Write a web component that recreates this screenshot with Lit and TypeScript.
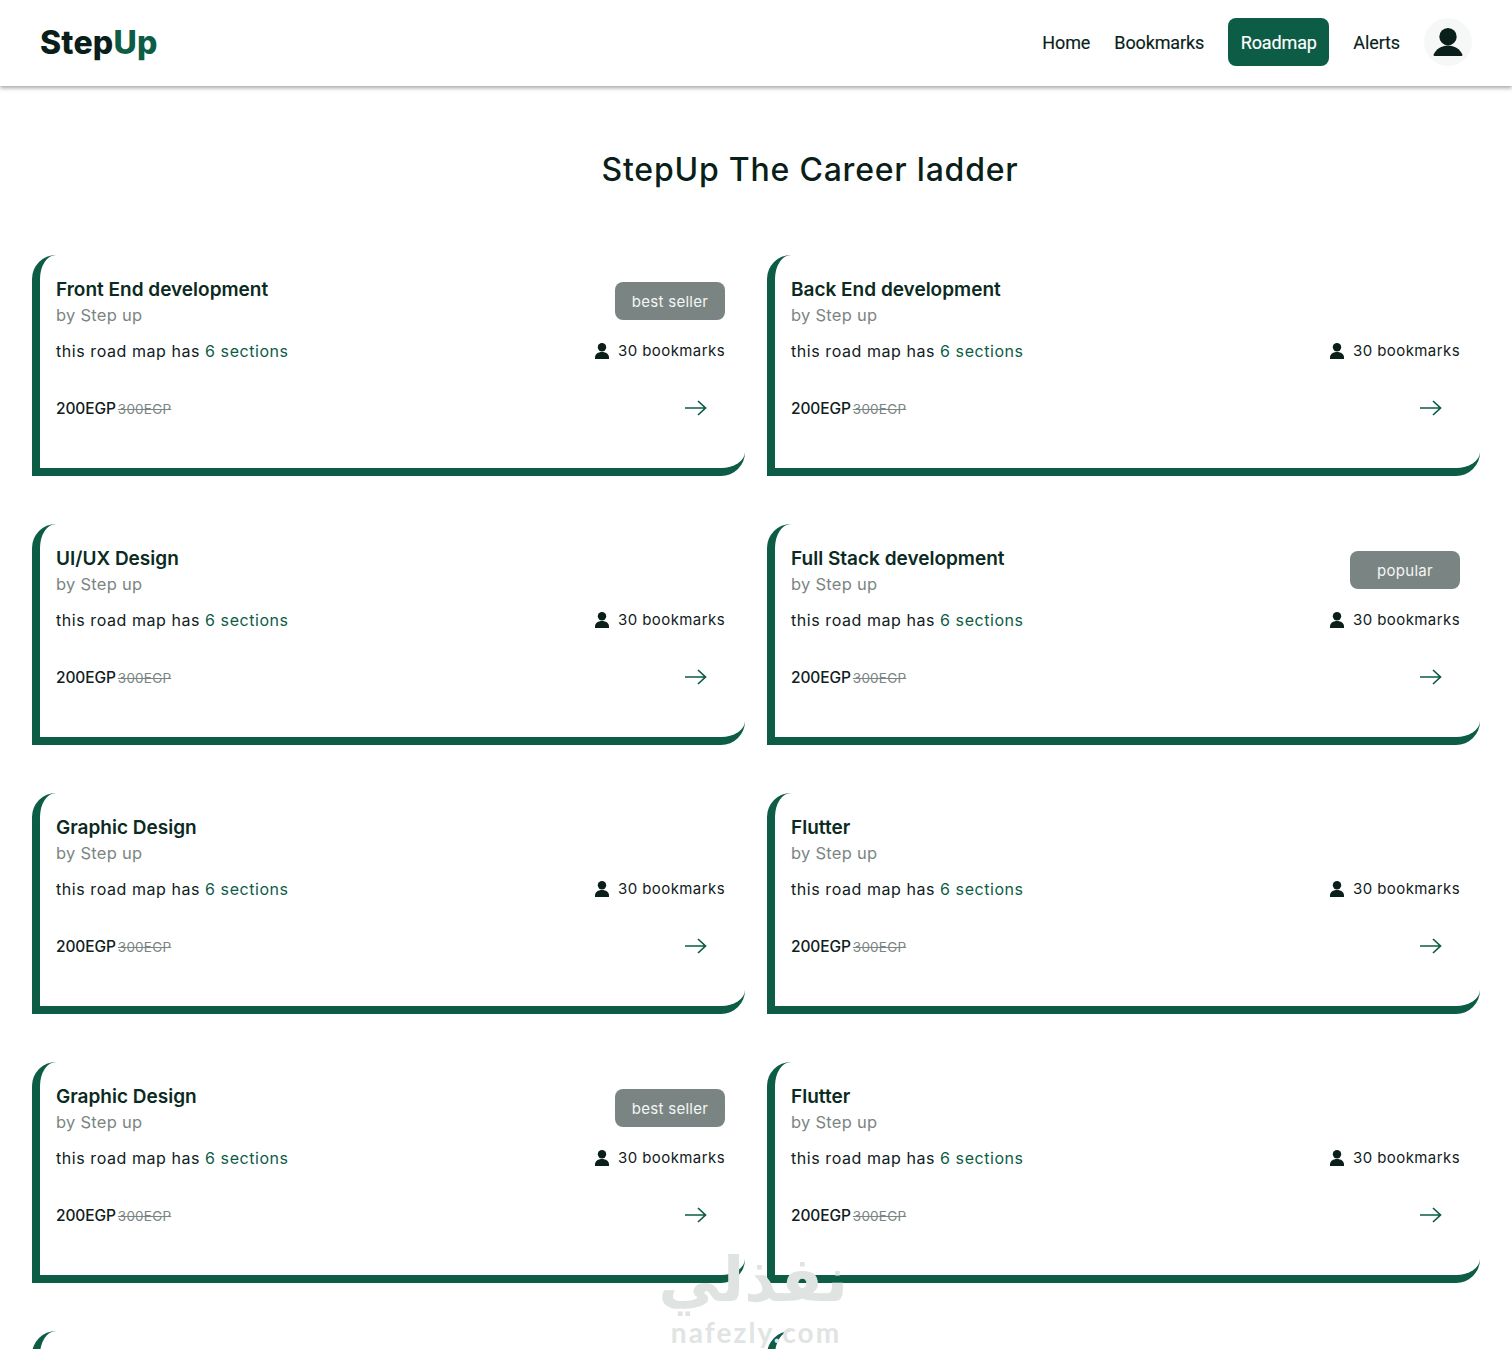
import { LitElement, html, css, nothing } from "lit";
import { customElement } from "lit/decorators.js";

type Card = { t: string; b?: string };

const cards: Card[] = [
  { t: "Front End development", b: "best seller" },
  { t: "Back End development" },
  { t: "UI/UX Design" },
  { t: "Full Stack development", b: "popular" },
  { t: "Graphic Design" },
  { t: "Flutter" },
  { t: "Graphic Design", b: "best seller" },
  { t: "Flutter" },
];

const smallPerson = html`<svg width="14" height="16" viewBox="0 0 14 16" fill="currentColor"><circle cx="7" cy="4.200" r="4.200"/><path d="M0 16v-1.500C0 11.200 3 9 7 9s7 2.200 7 5.500V16z"/></svg>`;
const bigPerson = html`<svg width="30" height="28" viewBox="0 0 30 28" fill="currentColor"><circle cx="15" cy="8.700" r="8.700"/><path d="M.5 26.800C3 21 8.500 17.500 15 17.500s12 3.500 14.500 9.300c.2.700-.3 1.200-1 1.200h-27c-.7 0-1.200-.5-1-1.200z"/></svg>`;

@customElement("app-root")
export class AppRoot extends LitElement {
  static styles = css`
    :host { display: block; height: 100vh; overflow: hidden; position: relative; background: #fff; font-family: Inter, sans-serif; color: #0b1f1a; }
    header { height: 86px; box-sizing: border-box; padding: 0 40px 2px; display: flex; align-items: center; justify-content: space-between; box-shadow: 0 2px 4px rgba(0,0,0,.36); position: relative; }
    .logo { font: 800 32px/1 Inter, sans-serif; letter-spacing: .2px; color: #0b1f1a; padding-top: 2px; }
    .logo span { color: #0d5c46; }
    nav { display: flex; align-items: center; gap: 24px; font: 400 18px/24px Roboto, sans-serif; letter-spacing: -.12px; color: #0b1f1a; -webkit-text-stroke: .15px currentColor; }
    .link { padding-top: 2px; }
    .active { box-sizing: border-box; background: #0d5c46; color: #fff; height: 48px; border-radius: 8px; padding: 2px 12.500px 0; display: flex; align-items: center; }
    .avatar { width: 48px; height: 48px; border-radius: 50%; background: #f6f7f7; display: flex; align-items: center; justify-content: center; color: #0b1f1a; }
    h1 { margin: 0; padding: 63px 0 0 108px; height: 106px; text-align: center; font: 500 32px/42px Inter, sans-serif; letter-spacing: .78px; color: #0b1f1a; }
    .grid { display: grid; grid-template-columns: 713px 713px; column-gap: 22px; row-gap: 48px; padding: 0 32px; }
    .card { height: 221px; box-sizing: border-box; border-left: 8px solid #0d5c46; border-bottom: 8px solid #0d5c46; border-radius: 24px 0 24px 0; padding: 22px 20px 0 16px; display: flex; flex-direction: column; }
    .row { display: flex; justify-content: space-between; }
    .head { height: 62px; }
    .title { font: 600 19px/25px Inter, sans-serif; color: #0b2a22; letter-spacing: 0; }
    .by { font: 400 16.500px/27px Inter, sans-serif; letter-spacing: .25px; color: #7b8583; }
    .badge { margin-top: 5px; width: 110px; height: 38px; border-radius: 8px; background: #7a8583; color: #f4f6f5; font: 400 15px/40px Inter, sans-serif; letter-spacing: .3px; text-align: center; }
    .info { height: 24px; font: 400 16px/24px Inter, sans-serif; letter-spacing: .56px; color: #10201c; }
    .info b { font-weight: 400; color: #0d5c46; }
    .marks { display: flex; align-items: center; gap: 9px; font-size: 15px; letter-spacing: .42px; }
    .marks svg { color: #0b1f1a; }
    .price { margin-top: 33px; height: 24px; align-items: center; }
    .cost { padding-top: 2px; }
    .now { font: 500 15.500px/24px Inter, sans-serif; letter-spacing: -.1px; color: #10201c; }
    .old { margin-left: 2px; font: 400 13.500px/24px Inter, sans-serif; letter-spacing: .2px; color: #7b8583; text-decoration: line-through; }
    .arrow { display: block; margin-right: 18px; color: #0d5c46; }
    .wm { position: absolute; left: 664px; top: 1243px; width: 184px; color: #dfe3e2; text-align: center; pointer-events: none; }
    .ar { font: 700 62px/74px "DejaVu Sans", sans-serif; white-space: nowrap; display: block; }
    .en { font: 700 28px/30px Lato, sans-serif; letter-spacing: 2.100px; white-space: nowrap; display: block; color: #e1e4e3; }
  `;

  private card(c: Card) {
    return html`<article class="card">
      <div class="row head">
        <div><div class="title">${c.t}</div><div class="by">by Step up</div></div>
        ${c.b ? html`<div class="badge">${c.b}</div>` : nothing}
      </div>
      <div class="row info">
        <div>this road map has <b>6 sections</b></div>
        <div class="marks">${smallPerson}<span>30 bookmarks</span></div>
      </div>
      <div class="row price">
        <div class="cost"><span class="now">200EGP</span><span class="old">300EGP</span></div>
        <svg class="arrow" width="22" height="16" viewBox="0 0 22 16" fill="none" stroke="currentColor" stroke-width="1.7"><path d="M0 8h20.500M13 1l7.500 7-7.500 7"/></svg>
      </div>
    </article>`;
  }

  render() {
    return html`
      <header>
        <div class="logo">Step<span>Up</span></div>
        <nav>
          <span class="link">Home</span><span class="link">Bookmarks</span><span class="active">Roadmap</span><span class="link">Alerts</span>
          <span class="avatar">${bigPerson}</span>
        </nav>
      </header>
      <h1>StepUp The Career ladder</h1>
      <section class="grid">
        ${cards.map((c) => this.card(c))}
        <div class="card"></div><div class="card"></div>
      </section>
      <div class="wm"><span class="ar" lang="ar" dir="rtl">نفذلي</span><span class="en">nafezly.com</span></div>
    `;
  }
}
